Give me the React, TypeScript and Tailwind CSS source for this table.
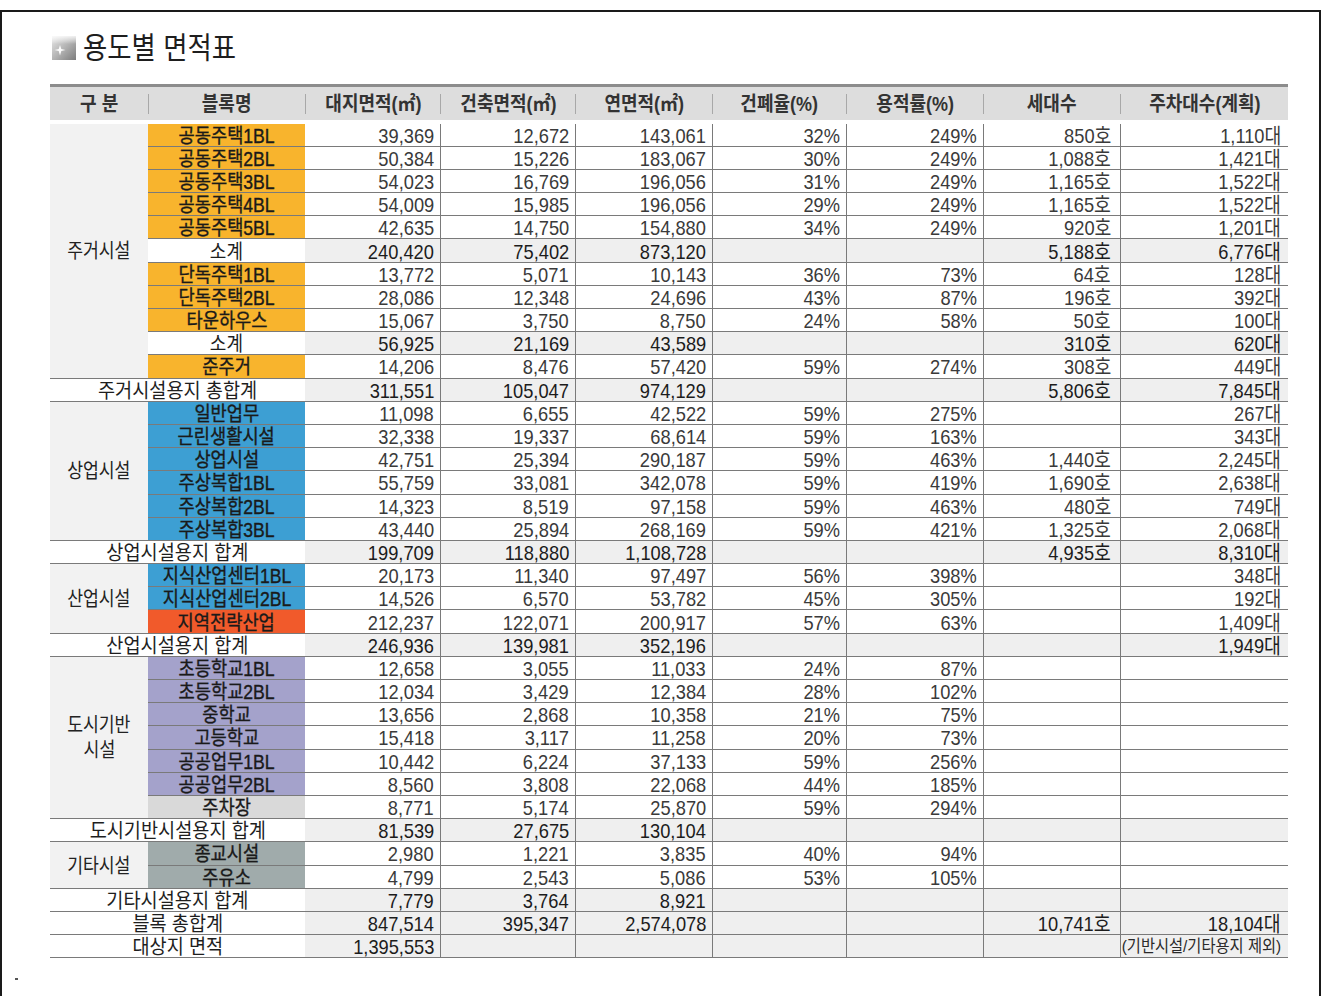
import React from 'react';

type Item = { kind: 'item'; name: string; bg: string; v: string[] };
type Sub = { kind: 'sub'; v: string[] };
type Total = { kind: 'total'; label: string; v: string[] };
type Group = { kind: 'group'; cat: string[]; span: string; rows: (Item | Sub)[] };

const BG = {
  o: 'bg-[#f8b42d]',
  b: 'bg-[#3d9fd3]',
  r: 'bg-[#f15a2b]',
  p: 'bg-[#a4a2cb]',
  g: 'bg-[#d9d9d9]',
  s: 'bg-[#a0abab]',
};

const it = (name: string, bg: string, v: string[]): Item => ({ kind: 'item', name, bg, v });
const sub = (v: string[]): Sub => ({ kind: 'sub', v });
const tot = (label: string, v: string[]): Total => ({ kind: 'total', label, v });

const data: (Group | Total)[] = [
  {
    kind: 'group',
    cat: ['주거시설'],
    span: 'row-span-11',
    rows: [
      it('공동주택1BL', BG.o, ['39,369', '12,672', '143,061', '32%', '249%', '850호', '1,110대']),
      it('공동주택2BL', BG.o, ['50,384', '15,226', '183,067', '30%', '249%', '1,088호', '1,421대']),
      it('공동주택3BL', BG.o, ['54,023', '16,769', '196,056', '31%', '249%', '1,165호', '1,522대']),
      it('공동주택4BL', BG.o, ['54,009', '15,985', '196,056', '29%', '249%', '1,165호', '1,522대']),
      it('공동주택5BL', BG.o, ['42,635', '14,750', '154,880', '34%', '249%', '920호', '1,201대']),
      sub(['240,420', '75,402', '873,120', '', '', '5,188호', '6,776대']),
      it('단독주택1BL', BG.o, ['13,772', '5,071', '10,143', '36%', '73%', '64호', '128대']),
      it('단독주택2BL', BG.o, ['28,086', '12,348', '24,696', '43%', '87%', '196호', '392대']),
      it('타운하우스', BG.o, ['15,067', '3,750', '8,750', '24%', '58%', '50호', '100대']),
      sub(['56,925', '21,169', '43,589', '', '', '310호', '620대']),
      it('준주거', BG.o, ['14,206', '8,476', '57,420', '59%', '274%', '308호', '449대']),
    ],
  },
  tot('주거시설용지 총합계', ['311,551', '105,047', '974,129', '', '', '5,806호', '7,845대']),
  {
    kind: 'group',
    cat: ['상업시설'],
    span: 'row-span-6',
    rows: [
      it('일반업무', BG.b, ['11,098', '6,655', '42,522', '59%', '275%', '', '267대']),
      it('근린생활시설', BG.b, ['32,338', '19,337', '68,614', '59%', '163%', '', '343대']),
      it('상업시설', BG.b, ['42,751', '25,394', '290,187', '59%', '463%', '1,440호', '2,245대']),
      it('주상복합1BL', BG.b, ['55,759', '33,081', '342,078', '59%', '419%', '1,690호', '2,638대']),
      it('주상복합2BL', BG.b, ['14,323', '8,519', '97,158', '59%', '463%', '480호', '749대']),
      it('주상복합3BL', BG.b, ['43,440', '25,894', '268,169', '59%', '421%', '1,325호', '2,068대']),
    ],
  },
  tot('상업시설용지 합계', ['199,709', '118,880', '1,108,728', '', '', '4,935호', '8,310대']),
  {
    kind: 'group',
    cat: ['산업시설'],
    span: 'row-span-3',
    rows: [
      it('지식산업센터1BL', BG.b, ['20,173', '11,340', '97,497', '56%', '398%', '', '348대']),
      it('지식산업센터2BL', BG.b, ['14,526', '6,570', '53,782', '45%', '305%', '', '192대']),
      it('지역전략산업', BG.r, ['212,237', '122,071', '200,917', '57%', '63%', '', '1,409대']),
    ],
  },
  tot('산업시설용지 합계', ['246,936', '139,981', '352,196', '', '', '', '1,949대']),
  {
    kind: 'group',
    cat: ['도시기반', '시설'],
    span: 'row-span-7',
    rows: [
      it('초등학교1BL', BG.p, ['12,658', '3,055', '11,033', '24%', '87%', '', '']),
      it('초등학교2BL', BG.p, ['12,034', '3,429', '12,384', '28%', '102%', '', '']),
      it('중학교', BG.p, ['13,656', '2,868', '10,358', '21%', '75%', '', '']),
      it('고등학교', BG.p, ['15,418', '3,117', '11,258', '20%', '73%', '', '']),
      it('공공업무1BL', BG.p, ['10,442', '6,224', '37,133', '59%', '256%', '', '']),
      it('공공업무2BL', BG.p, ['8,560', '3,808', '22,068', '44%', '185%', '', '']),
      it('주차장', BG.g, ['8,771', '5,174', '25,870', '59%', '294%', '', '']),
    ],
  },
  tot('도시기반시설용지 합계', ['81,539', '27,675', '130,104', '', '', '', '']),
  {
    kind: 'group',
    cat: ['기타시설'],
    span: 'row-span-2',
    rows: [
      it('종교시설', BG.s, ['2,980', '1,221', '3,835', '40%', '94%', '', '']),
      it('주유소', BG.s, ['4,799', '2,543', '5,086', '53%', '105%', '', '']),
    ],
  },
  tot('기타시설용지 합계', ['7,779', '3,764', '8,921', '', '', '', '']),
  tot('블록 총합계', ['847,514', '395,347', '2,574,078', '', '', '10,741호', '18,104대']),
  tot('대상지 면적', ['1,395,553', '', '', '', '', '', '(기반시설/기타용지 제외)']),
];

const headers = ['구 분', '블록명', '대지면적(㎡)', '건축면적(㎡)', '연면적(㎡)', '건폐율(%)', '용적률(%)', '세대수', '주차대수(계획)'];

function DataCells({ v, shaded, k }: { v: string[]; shaded: boolean; k: string }) {
  return (
    <>
      {v.map((val, i) => {
        const note = val.startsWith('(');
        return (
          <div
            key={k + '-' + i}
            className={[
              'flex items-center justify-end border-b border-[#7a7a7a] pt-[1px]',
              i > 0 ? 'border-l' : '',
              i === 5 ? 'pr-[9px]' : i === 6 ? 'pr-[7px]' : 'pr-[6px]',
              shaded ? 'bg-[#efefef] text-[#1c1c1c]' : 'bg-white text-[#3a3a3a]',
            ].join(' ')}
          >
            {val &&
              (note ? (
                <span className="inline-block origin-right scale-x-[0.9] whitespace-nowrap text-[17px] leading-none text-[#2a2a2a]">
                  {val}
                </span>
              ) : (
                <span className="inline-block origin-right scale-x-[0.87] whitespace-nowrap text-[21px] leading-none">
                  {val}
                </span>
              ))}
          </div>
        );
      })}
    </>
  );
}

function Icon() {
  return (
    <svg width="24" height="24" viewBox="0 0 24 24" className="ml-[2px] shrink-0">
      <defs>
        <linearGradient id="ig" x1="0" y1="0" x2="1" y2="1">
          <stop offset="0" stopColor="#e8e8e8" />
          <stop offset="0.5" stopColor="#b4b4b4" />
          <stop offset="1" stopColor="#7c7c7c" />
        </linearGradient>
        <linearGradient id="ig2" x1="0" y1="0" x2="0" y2="1">
          <stop offset="0" stopColor="#ffffff" stopOpacity="0.8" />
          <stop offset="1" stopColor="#ffffff" stopOpacity="0" />
        </linearGradient>
      </defs>
      <rect width="24" height="24" fill="url(#ig)" />
      <rect width="24" height="8" fill="url(#ig2)" />
      <path d="M8 9 L9.3 13 L13.5 14 L9.3 15 L8 19.5 L6.7 15 L2.5 14 L6.7 13 Z" fill="#ffffff" opacity="0.95" />
    </svg>
  );
}

export default function App() {
  const cells: React.ReactNode[] = [];
  data.forEach((g, gi) => {
    if (g.kind === 'group') {
      g.rows.forEach((r, ri) => {
        const k = `${gi}-${ri}`;
        if (ri === 0) {
          cells.push(
            <div
              key={k + 'cat'}
              className={`${g.span} flex flex-col items-center justify-center bg-[#f2f2f2] border-b border-[#7a7a7a] pt-[2px] text-[#222]`}
            >
              {g.cat.map((c) => (
                <span key={c} className="inline-block scale-x-[0.86] whitespace-nowrap text-[20px] leading-[25px]">
                  {c}
                </span>
              ))}
            </div>
          );
        }
        if (r.kind === 'item') {
          cells.push(
            <div key={k + 'n'} className={`flex items-center justify-center border-b border-[#7a7a7a] pt-[2px] ${r.bg}`}>
              <span className="inline-block scale-x-[0.88] whitespace-nowrap text-[20px] leading-none text-[#1a1a1a] [-webkit-text-stroke:0.4px_#1a1a1a]">
                {r.name}
              </span>
            </div>
          );
          cells.push(<DataCells key={k + 'd'} k={k} v={r.v} shaded={false} />);
        } else {
          cells.push(
            <div key={k + 'n'} className="flex items-center justify-center border-b border-[#7a7a7a] bg-white pt-[2px]">
              <span className="inline-block scale-x-[0.9] whitespace-nowrap text-[20px] leading-none text-[#1e1e1e]">소계</span>
            </div>
          );
          cells.push(<DataCells key={k + 'd'} k={k} v={r.v} shaded={true} />);
        }
      });
    } else {
      const k = `${gi}-t`;
      cells.push(
        <div key={k + 'n'} className="col-span-2 flex items-center justify-center border-b border-[#7a7a7a] bg-white pt-[2px]">
          <span className="inline-block scale-x-[0.93] whitespace-nowrap text-[20px] leading-none text-[#1e1e1e]">
            {g.label}
          </span>
        </div>
      );
      cells.push(<DataCells key={k + 'd'} k={k} v={g.v} shaded={true} />);
    }
  });

  return (
    <div className="w-[1323px] h-[996px] overflow-hidden bg-white font-['Liberation_Sans','Noto_Sans_CJK_KR',sans-serif] text-[#333]">
      <div className="mt-[10px] w-[1321px] h-[986px] border-t-2 border-x-2 border-[#1a1a1a] pl-[48px] pt-[21px]">
        <div className="flex h-[30px] items-center gap-[7px]">
          <Icon />
          <span className="inline-block origin-left scale-x-[0.88] whitespace-nowrap text-[30px] leading-none text-[#1e1e1e]">
            용도별 면적표
          </span>
        </div>

        <div className="mt-[21px] grid h-[36px] w-[1238px] grid-cols-[98px_157px_135px_135px_137px_134px_137px_137px_168px] border-t-[3px] border-[#8c8c8c] bg-[#dddddd]">
          {headers.map((h, i) => (
            <div key={h} className="flex items-center">
              {i > 0 && <div className="h-[20px] w-px bg-[#a8a8a8]" />}
              <div className="flex flex-1 justify-center pt-[1px]">
                <span className="inline-block scale-x-[0.9] whitespace-nowrap text-[20px] leading-none font-bold text-[#333]">
                  {h}
                </span>
              </div>
            </div>
          ))}
        </div>

        <div className="mt-[3.5px] grid w-[1238px] grid-cols-[98px_157px_135px_135px_137px_134px_137px_137px_168px] grid-rows-[repeat(36,23.2px)]">
          {cells}
        </div>

        <div className="-ml-[35px] mt-[20px] h-[2px] w-[3px] bg-[#555]" />
      </div>
    </div>
  );
}
